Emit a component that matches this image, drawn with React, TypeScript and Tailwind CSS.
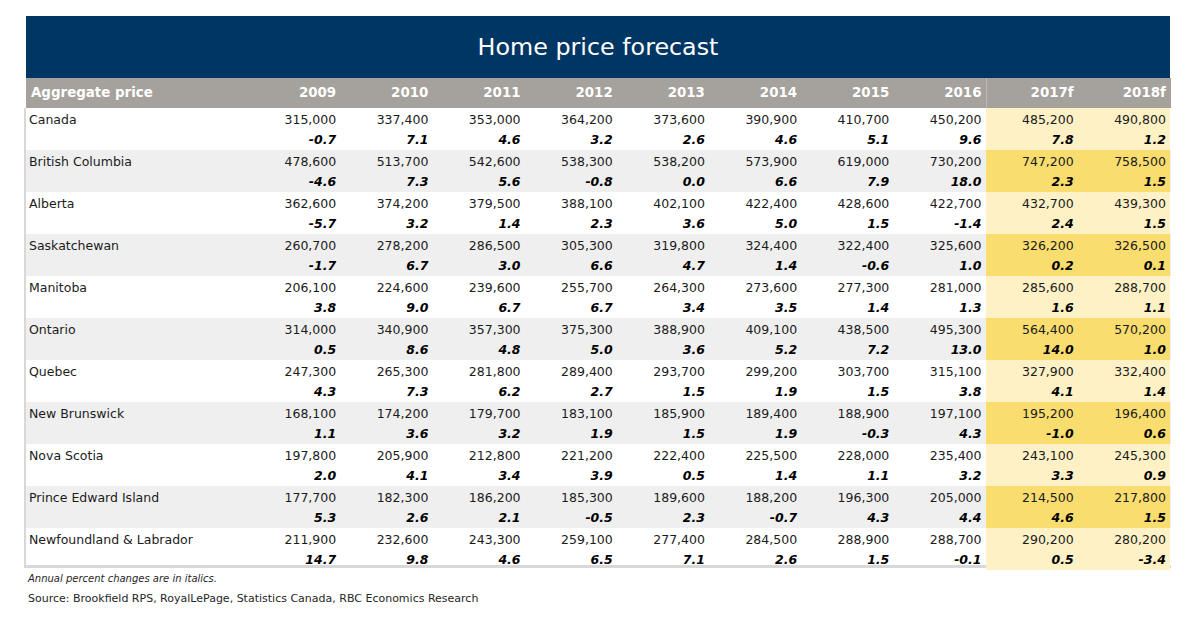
import type { ReactNode } from "react";

type Row = {
  name: string;
  prices: string[];
  changes: string[];
};

const years = ["2009", "2010", "2011", "2012", "2013", "2014", "2015", "2016", "2017f", "2018f"];

const rows: Row[] = [
  {
    name: "Canada",
    prices: ["315,000", "337,400", "353,000", "364,200", "373,600", "390,900", "410,700", "450,200", "485,200", "490,800"],
    changes: ["-0.7", "7.1", "4.6", "3.2", "2.6", "4.6", "5.1", "9.6", "7.8", "1.2"],
  },
  {
    name: "British Columbia",
    prices: ["478,600", "513,700", "542,600", "538,300", "538,200", "573,900", "619,000", "730,200", "747,200", "758,500"],
    changes: ["-4.6", "7.3", "5.6", "-0.8", "0.0", "6.6", "7.9", "18.0", "2.3", "1.5"],
  },
  {
    name: "Alberta",
    prices: ["362,600", "374,200", "379,500", "388,100", "402,100", "422,400", "428,600", "422,700", "432,700", "439,300"],
    changes: ["-5.7", "3.2", "1.4", "2.3", "3.6", "5.0", "1.5", "-1.4", "2.4", "1.5"],
  },
  {
    name: "Saskatchewan",
    prices: ["260,700", "278,200", "286,500", "305,300", "319,800", "324,400", "322,400", "325,600", "326,200", "326,500"],
    changes: ["-1.7", "6.7", "3.0", "6.6", "4.7", "1.4", "-0.6", "1.0", "0.2", "0.1"],
  },
  {
    name: "Manitoba",
    prices: ["206,100", "224,600", "239,600", "255,700", "264,300", "273,600", "277,300", "281,000", "285,600", "288,700"],
    changes: ["3.8", "9.0", "6.7", "6.7", "3.4", "3.5", "1.4", "1.3", "1.6", "1.1"],
  },
  {
    name: "Ontario",
    prices: ["314,000", "340,900", "357,300", "375,300", "388,900", "409,100", "438,500", "495,300", "564,400", "570,200"],
    changes: ["0.5", "8.6", "4.8", "5.0", "3.6", "5.2", "7.2", "13.0", "14.0", "1.0"],
  },
  {
    name: "Quebec",
    prices: ["247,300", "265,300", "281,800", "289,400", "293,700", "299,200", "303,700", "315,100", "327,900", "332,400"],
    changes: ["4.3", "7.3", "6.2", "2.7", "1.5", "1.9", "1.5", "3.8", "4.1", "1.4"],
  },
  {
    name: "New Brunswick",
    prices: ["168,100", "174,200", "179,700", "183,100", "185,900", "189,400", "188,900", "197,100", "195,200", "196,400"],
    changes: ["1.1", "3.6", "3.2", "1.9", "1.5", "1.9", "-0.3", "4.3", "-1.0", "0.6"],
  },
  {
    name: "Nova Scotia",
    prices: ["197,800", "205,900", "212,800", "221,200", "222,400", "225,500", "228,000", "235,400", "243,100", "245,300"],
    changes: ["2.0", "4.1", "3.4", "3.9", "0.5", "1.4", "1.1", "3.2", "3.3", "0.9"],
  },
  {
    name: "Prince Edward Island",
    prices: ["177,700", "182,300", "186,200", "185,300", "189,600", "188,200", "196,300", "205,000", "214,500", "217,800"],
    changes: ["5.3", "2.6", "2.1", "-0.5", "2.3", "-0.7", "4.3", "4.4", "4.6", "1.5"],
  },
  {
    name: "Newfoundland & Labrador",
    prices: ["211,900", "232,600", "243,300", "259,100", "277,400", "284,500", "288,900", "288,700", "290,200", "280,200"],
    changes: ["14.7", "9.8", "4.6", "6.5", "7.1", "2.6", "1.5", "-0.1", "0.5", "-3.4"],
  },
];

const grid = "grid grid-cols-[222px_repeat(10,92.2px)]";

function Cell({ children, className }: { children: ReactNode; className?: string }) {
  return <div className={`flex flex-col items-end pr-[4px] pt-[2px] ${className ?? ""}`}>{children}</div>;
}

export default function App() {
  return (
    <div className="h-[625px] w-[1200px] bg-white pl-[24px] pt-[16px] font-['DejaVu_Sans',Verdana,sans-serif] text-[#1b1b1b]">
      <div className="w-[1147px]">
        <div className="ml-[2px] flex h-[62px] w-[1144px] items-center justify-center bg-[#003663] pt-[2px]">
          <h1 className="text-[23.8px] text-white">Home price forecast</h1>
        </div>

        <div className={`${grid} ml-[2px] h-[30px] items-center bg-[#a5a19c] text-[13.4px] font-bold text-white`}>
          <div className="pl-[5px]">Aggregate price</div>
          {years.map((y, i) => (
            <div
              key={y}
              className={`flex h-full items-center justify-end pr-[4px] ${i === 8 ? "border-l border-[#bdb9b4]" : ""}`}
            >
              {y}
            </div>
          ))}
        </div>

        <div className="border-b-[3px] border-l-2 border-[#d8d8d8]">
          {rows.map((row, r) => {
            const shaded = r % 2 === 1;
            const last = r === rows.length - 1;
            return (
              <div
                key={row.name}
                className={`${grid} ${last ? "h-[37px]" : "h-[42px]"} text-[12.5px] leading-[20px] ${shaded ? "bg-[#efefef]" : "bg-white"}`}
              >
                <div className="pl-[3px] pt-[2px]">{row.name}</div>
                {row.prices.map((p, c) => {
                  const hl = c >= 8 ? (shaded ? "bg-[#f9dd6e]" : "bg-[#fdf1c5]") : "";
                  return (
                    <Cell key={c} className={hl}>
                      <span>{p}</span>
                      <span className="font-bold italic text-black">{row.changes[c]}</span>
                    </Cell>
                  );
                })}
              </div>
            );
          })}
        </div>

        <div className="pl-[4px] pt-[4px] leading-[14px] text-[#262626]">
          <p className="text-[10px] italic">Annual percent changes are in italics.</p>
          <p className="mt-[6px] text-[11px]">Source: Brookfield RPS, RoyalLePage, Statistics Canada, RBC Economics Research</p>
        </div>
      </div>
    </div>
  );
}
